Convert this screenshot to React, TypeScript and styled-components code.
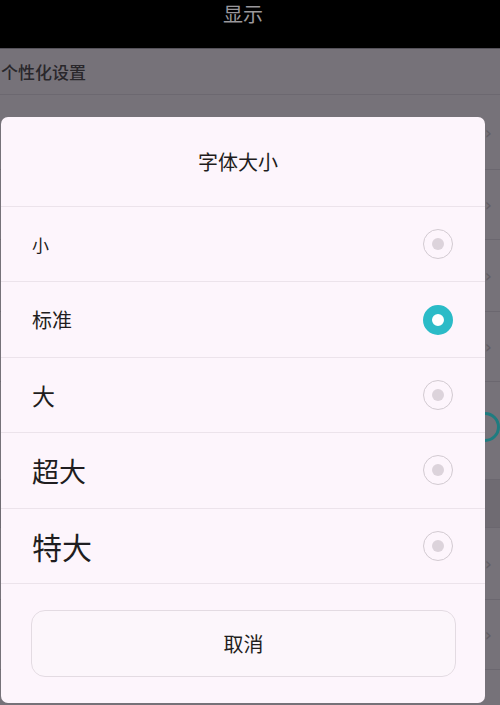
import React from 'react';
import styled, {createGlobalStyle} from 'styled-components';

const GlobalStyle = createGlobalStyle`
    html, body {
        margin: 0;
        padding: 0;
        background: #767279;
    }

    body {
        font-family: "Noto Sans CJK SC", "Noto Sans", sans-serif;
    }
`;

interface BackRow {
    height: number;
    kind: 'chevron' | 'switch' | 'header' | 'plain';
}

const backRows: BackRow[] = [
    {height: 75, kind: 'chevron'},
    {height: 70, kind: 'chevron'},
    {height: 72, kind: 'chevron'},
    {height: 70, kind: 'chevron'},
    {height: 98, kind: 'switch'},
    {height: 48, kind: 'header'},
    {height: 72, kind: 'chevron'},
    {height: 70, kind: 'chevron'},
    {height: 70, kind: 'plain'},
];

const options = [
    {label: '小', size: 17},
    {label: '标准', size: 20},
    {label: '大', size: 23},
    {label: '超大', size: 27},
    {label: '特大', size: 30},
];

const App = () => {
    const selected = 1;

    return (
        <>
            <GlobalStyle/>
            <Screen>
                <TopBar>
                    <TopTitle>{'显示'}</TopTitle>
                </TopBar>
                <SectionHeader>{'个性化设置'}</SectionHeader>
                {backRows.map((row, i) => (
                    <SettingRow
                        key={i}
                        $height={row.height}
                        $header={row.kind === 'header'}
                    >
                        {row.kind === 'chevron' && <Chevron>{'›'}</Chevron>}
                        {row.kind === 'switch' && <SwitchKnob/>}
                    </SettingRow>
                ))}

                <Dialog>
                    <DialogTitle>{'字体大小'}</DialogTitle>
                    <OptionList>
                        {options.map((opt, i) => (
                            <OptionRow key={opt.label}>
                                <OptionLabel $size={opt.size}>{opt.label}</OptionLabel>
                                <Radio $checked={i === selected}/>
                            </OptionRow>
                        ))}
                    </OptionList>
                    <Footer>
                        <CancelButton>{'取消'}</CancelButton>
                    </Footer>
                </Dialog>
            </Screen>
        </>
    );
};

const Screen = styled.div`
    position: relative;
    width: 500px;
    height: 705px;
    overflow: hidden;
    background: #767279;
`;

const TopBar = styled.div`
    height: 49px;
    background: #000;
    display: flex;
    justify-content: center;
    border-bottom: 1px solid #55525a;
    box-sizing: border-box;
`;

const TopTitle = styled.div`
    font-size: 20px;
    line-height: 26px;
    margin-top: 1px;
    margin-right: 14px;
    color: #9a989c;
`;

const SectionHeader = styled.div`
    height: 46px;
    display: flex;
    align-items: center;
    padding-left: 1px;
    font-size: 17px;
    font-weight: 500;
    color: #29272b;
    border-bottom: 1px solid #6c6870;
    box-sizing: border-box;
`;

const SettingRow = styled.div<{$height: number; $header: boolean}>`
    height: ${(p) => p.$height}px;
    display: flex;
    align-items: center;
    justify-content: flex-end;
    padding-right: 8px;
    box-sizing: border-box;
    border-bottom: 1px solid #6b676f;
    background: ${(p) => (p.$header ? '#6f6b72' : '#767279')};
`;

const Chevron = styled.span`
    font-family: "DejaVu Sans", sans-serif;
    font-size: 18px;
    color: #615d64;
`;

const SwitchKnob = styled.span`
    width: 24px;
    height: 24px;
    border-radius: 50%;
    border: 3px solid #1f7c80;
    margin-right: -8px;
    margin-top: -8px;
`;

const Dialog = styled.div`
    position: absolute;
    left: 1px;
    top: 117px;
    width: 484px;
    height: 586px;
    background: #fdf5fc;
    border-radius: 7px;
    display: flex;
    flex-direction: column;
    overflow: hidden;
`;

const DialogTitle = styled.div`
    height: 90px;
    display: flex;
    align-items: center;
    justify-content: center;
    font-size: 20px;
    color: #1f1d20;
    padding-right: 10px;
    border-bottom: 1px solid #ece3eb;
    box-sizing: border-box;
`;

const OptionList = styled.div`
    display: flex;
    flex-direction: column;
`;

const OptionRow = styled.div`
    height: 75.4px;
    display: flex;
    align-items: center;
    justify-content: space-between;
    padding: 0 32px 0 31px;
    border-bottom: 1px solid #ece3eb;
    box-sizing: border-box;
`;

const OptionLabel = styled.span<{$size: number}>`
    font-size: ${(p) => p.$size}px;
    color: #1f1d20;
`;

const Radio = styled.span<{$checked: boolean}>`
    width: 30px;
    height: 30px;
    border-radius: 50%;
    box-sizing: border-box;
    display: flex;
    align-items: center;
    justify-content: center;
    border: ${(p) => (p.$checked ? '9px solid #2bbbc7' : '1.5px solid #d2cad1')};
    background: ${(p) => (p.$checked ? '#fff' : 'transparent')};

    &::after {
        content: '';
        width: 12px;
        height: 12px;
        border-radius: 50%;
        background: #dcd3db;
        display: ${(p) => (p.$checked ? 'none' : 'block')};
    }
`;

const Footer = styled.div`
    flex: 1;
    padding: 26px 29px 0 30px;
`;

const CancelButton = styled.div`
    height: 67px;
    border: 1px solid #e3dbe2;
    border-radius: 14px;
    background: #fcf6fb;
    display: flex;
    align-items: center;
    justify-content: center;
    font-size: 20px;
    color: #1f1d20;
    box-sizing: border-box;
`;

export default App;
